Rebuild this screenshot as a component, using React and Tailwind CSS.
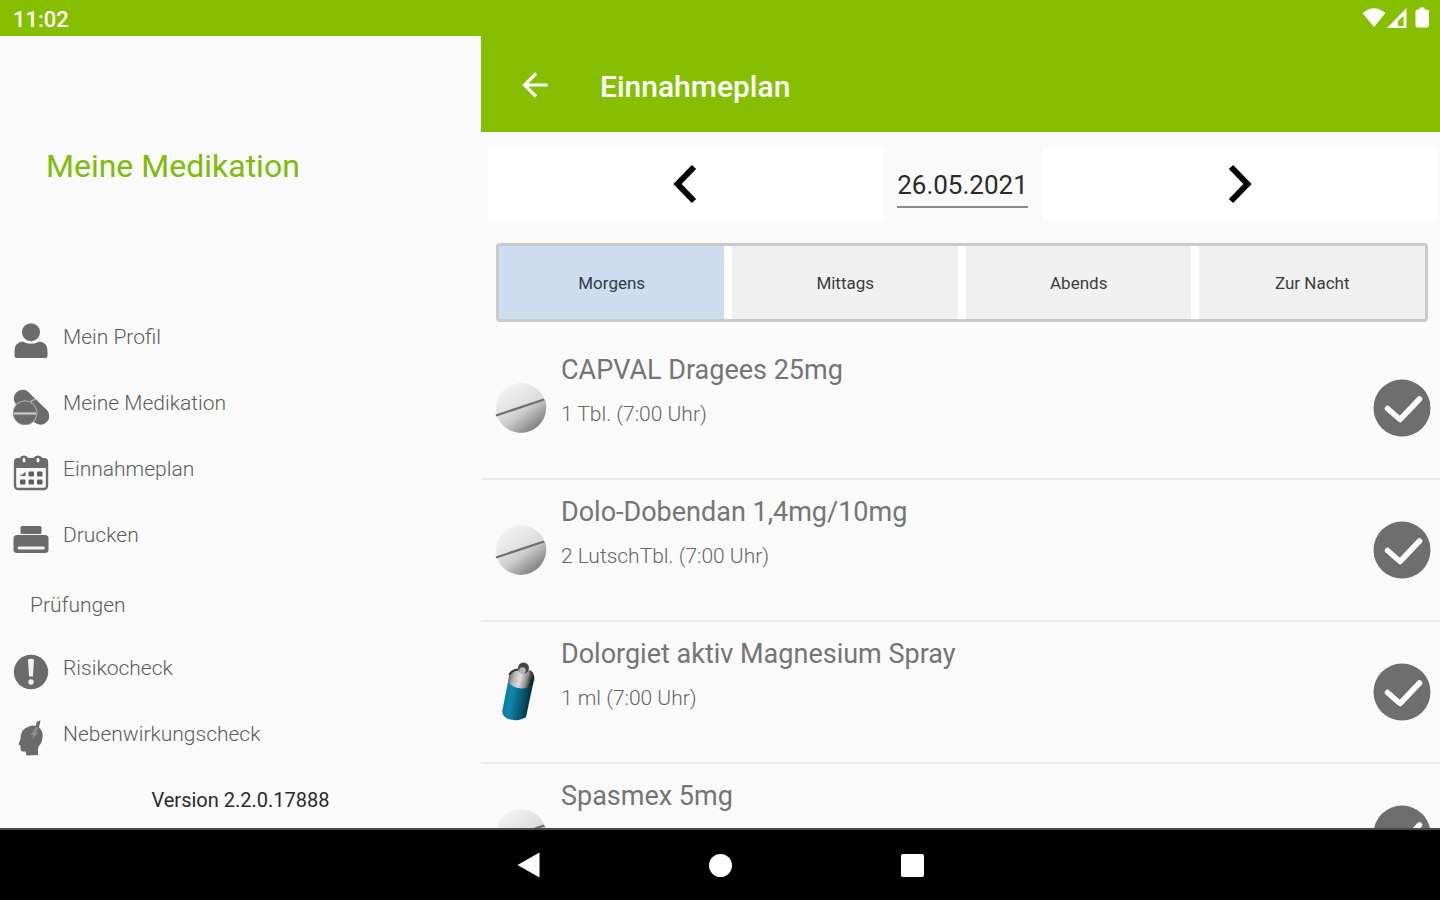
import { useState } from "react";

function ProfileIcon() {
  return (
    <svg viewBox="0 0 36 36" className="size-9" fill="#6b6b6b" aria-hidden="true">
      <circle cx="18" cy="9.2" r="9" />
      <path d="M1.5 33V28.5Q1.5 19.500 9.5 18.500Q18 23 26.500 18.500Q34.500 19.500 34.500 28.500V33Q34.500 35 32.500 35H3.500Q1.500 35 1.500 33Z" />
    </svg>
  );
}

function PillsIcon() {
  return (
    <svg viewBox="0 0 36 36" className="size-9" aria-hidden="true">
      <line x1="9.500" y1="9.500" x2="27.500" y2="27" stroke="#6b6b6b" strokeWidth="17.500" strokeLinecap="round" />
      <circle cx="12" cy="24" r="12.500" fill="#b4b4b4" />
      <circle cx="12" cy="24" r="11.500" fill="#6b6b6b" />
      <path d="M1 24.500H23" stroke="#cccccc" strokeWidth="2.200" />
      <path d="M22.500 10L17.500 12.500" stroke="#b4b4b4" strokeWidth="1.400" />
    </svg>
  );
}

function CalendarIcon() {
  return (
    <svg viewBox="0 0 36 36" className="size-9" aria-hidden="true">
      <rect x="2" y="5" width="32" height="29" rx="3" fill="#fafafa" stroke="#6b6b6b" strokeWidth="2.400" />
      <path d="M1 13V6.500Q1 3 4.500 3H6.500Q8 0.500 11 0.500T15.500 3H20.500Q22 0.500 25 0.500T29.500 3H31.500Q35 3 35 6.500V13Z" fill="#6b6b6b" />
      <path d="M11 4.500V6M25 4.500V6" stroke="#fafafa" strokeWidth="2.800" strokeLinecap="round" />
      <g fill="#5f5f5f">
        <path d="M7 19L9 20L12.500 16.500V21H8Z" />
        <rect x="15.500" y="16.500" width="5.500" height="5" rx="1" />
        <rect x="24" y="16.500" width="5.500" height="5" rx="1" />
        <rect x="7" y="24.500" width="5.500" height="5" rx="1" />
        <rect x="15.500" y="24.500" width="5.500" height="5" rx="1" />
        <rect x="24" y="24.500" width="5.500" height="5" rx="1" />
      </g>
    </svg>
  );
}

function PrinterIcon() {
  return (
    <svg viewBox="0 0 36 36" className="size-9" aria-hidden="true">
      <rect x="7.500" y="5" width="21" height="8" rx="1.500" fill="#6b6b6b" />
      <rect x="0.500" y="14" width="35" height="18" rx="3.500" fill="#6b6b6b" />
      <path d="M6 27H30.500" stroke="#f2f2f2" strokeWidth="2.800" strokeLinecap="round" />
    </svg>
  );
}

function AlertIcon() {
  return (
    <svg viewBox="0 0 36 36" className="size-9" aria-hidden="true">
      <circle cx="18" cy="18" r="17.200" fill="#6b6b6b" />
      <path d="M15 5.500Q18 4 21 5.500L20 22.500H16Z" fill="#f0f0f0" />
      <circle cx="18" cy="28" r="2.700" fill="#f0f0f0" />
    </svg>
  );
}

function HeadIcon() {
  return (
    <svg viewBox="0 0 36 36" className="size-9" aria-hidden="true">
      <path d="M13.500 35.500L12.500 31.500H9.500Q7.500 31 7.500 28.500V26L5.500 24L7.500 19.500Q7 9 16 6.500Q20 5 22.500 6L24 1.500L27.500 0.500L26 7.500Q30.500 11 29.500 18Q29 23 25.500 26.500Q24.500 30 25 35Z" fill="#6b6b6b" />
      <path d="M23 7L17.500 15H20.500L19 19.500L25.500 12.500H23L25.500 8Z" fill="#8c8c8c" />
    </svg>
  );
}

function TabletIcon() {
  return (
    <svg viewBox="0 0 52 52" className="size-[52px]" aria-hidden="true">
      <defs>
        <linearGradient id="pillTop" x1="0.200" y1="0.100" x2="0.800" y2="1">
          <stop offset="0" stopColor="#f2f2f2" />
          <stop offset="0.500" stopColor="#dcdcdc" />
          <stop offset="1" stopColor="#a8a8a8" />
        </linearGradient>
        <linearGradient id="pillBottom" x1="0.100" y1="0" x2="0.900" y2="0.700">
          <stop offset="0" stopColor="#f2f2f2" />
          <stop offset="0.550" stopColor="#cbcbcb" />
          <stop offset="1" stopColor="#858585" />
        </linearGradient>
      </defs>
      <circle cx="26" cy="26" r="25" fill="url(#pillTop)" />
      <path d="M1.500 33L50 17A25 25 0 0 1 1.500 33Z" fill="url(#pillBottom)" />
      <path d="M1 33.500L49 17.500" stroke="#6f6f6f" strokeWidth="2.200" />
    </svg>
  );
}

function SprayIcon() {
  return (
    <svg viewBox="0 0 52 60" className="h-[60px] w-[52px]" aria-hidden="true">
      <defs>
        <linearGradient id="sprayBody" x1="0" y1="0" x2="1" y2="0.200">
          <stop offset="0" stopColor="#0a6f92" />
          <stop offset="0.350" stopColor="#1288ae" />
          <stop offset="0.750" stopColor="#07506c" />
          <stop offset="1" stopColor="#042733" />
        </linearGradient>
        <linearGradient id="sprayCap" x1="0" y1="0" x2="1" y2="0.200">
          <stop offset="0" stopColor="#3c3c3c" />
          <stop offset="0.300" stopColor="#b4b4b4" />
          <stop offset="0.550" stopColor="#dedede" />
          <stop offset="0.800" stopColor="#8c8c8c" />
          <stop offset="1" stopColor="#1c1c1c" />
        </linearGradient>
      </defs>
      <path d="M13 20L7.500 48Q6.500 54 13 57Q24 60 31 55L38.500 20Z" fill="url(#sprayBody)" />
      <path d="M13 19Q14 9 22 7L34 8Q40 12 38.500 20Q35.500 27 26 26.500Q15 25 13 19Z" fill="url(#sprayCap)" />
      <path d="M14 13Q17 8 23 7.500M35 9Q39 12 38.500 19" fill="none" stroke="#333333" strokeWidth="1.800" />
      <circle cx="28.500" cy="6" r="5.500" fill="#444444" />
      <circle cx="27.500" cy="8.500" r="3.200" fill="#b4b4b4" />
    </svg>
  );
}

function CheckIcon() {
  return (
    <svg viewBox="0 0 58 58" className="size-[58px]" aria-hidden="true">
      <circle cx="29" cy="29" r="28.500" fill="#6e6e6e" />
      <path d="M14.500 29.500L27 40.500L46.500 20" fill="none" stroke="#ffffff" strokeWidth="5.500" strokeLinecap="round" strokeLinejoin="round" />
    </svg>
  );
}

const checks = [
  { label: "Risikocheck", Icon: AlertIcon },
  { label: "Nebenwirkungscheck", Icon: HeadIcon },
];

const pages = [
  { label: "Mein Profil", Icon: ProfileIcon },
  { label: "Meine Medikation", Icon: PillsIcon },
  { label: "Einnahmeplan", Icon: CalendarIcon },
  { label: "Drucken", Icon: PrinterIcon },
];

const dayTimes = ["Morgens", "Mittags", "Abends", "Zur Nacht"];

const intakes = [
  { name: "CAPVAL Dragees 25mg", dose: "1 Tbl. (7:00 Uhr)", Icon: TabletIcon },
  { name: "Dolo-Dobendan 1,4mg/10mg", dose: "2 LutschTbl. (7:00 Uhr)", Icon: TabletIcon },
  { name: "Dolorgiet aktiv Magnesium Spray", dose: "1 ml (7:00 Uhr)", Icon: SprayIcon },
  { name: "Spasmex 5mg", Icon: TabletIcon },
];

function MenuItem({ label, Icon }) {
  return (
    <li>
      <a href="#" className="flex h-[66px] items-center gap-3.5 pl-[13px]">
        <Icon />
        <span className="pb-1.5">{label}</span>
      </a>
    </li>
  );
}

function Sidebar() {
  return (
    <aside className="flex w-[33.4%] shrink-0 flex-col bg-[#fafafa] text-[21px] font-light text-[#5c5c5c]">
      <h1 className="px-[46px] pt-[110px] text-[32px] leading-10 font-normal text-[#80bb0a]">Meine Medikation</h1>
      <nav className="pt-[122px]">
        <ul>
          {pages.map((item) => (
            <MenuItem key={item.label} {...item} />
          ))}
        </ul>
        <h2 className="flex h-[67px] items-center pl-[30px]">Prüfungen</h2>
        <ul>
          {checks.map((item) => (
            <MenuItem key={item.label} {...item} />
          ))}
        </ul>
      </nav>
      <p className="mt-auto pb-3 text-center text-[20px] leading-8 font-normal text-[#2a2a2a]">Version 2.2.0.17888</p>
    </aside>
  );
}

function StatusBar() {
  return (
    <div className="flex h-9 shrink-0 items-center justify-between bg-[#86bf00] pr-2.5 pl-[13px] text-white">
      <span className="pt-0.5 text-[22px] font-medium">11:02</span>
      <svg viewBox="0 0 68 24" className="h-6 w-[68px]" fill="#ffffff" aria-hidden="true">
        <path d="M0.500 7Q12 -2.500 23.500 7L12 21Z" />
        <path fillRule="evenodd" d="M25 22L44.500 2V22ZM36.500 20Q34.500 16 38 13L41.500 10V20Z" />
        <path d="M57.500 1.500H62.500V3.500H65Q67 3.500 67 5.500V19.500Q67 21.500 65 21.500H55.500Q53.500 21.500 53.500 19.500V5.500Q53.500 3.500 55.500 3.500H57.500Z" />
      </svg>
    </div>
  );
}

function DateBar() {
  return (
    <div className="flex items-center pt-4 pr-[3px] pl-[7px]">
      <button type="button" aria-label="Vorheriger Tag" className="flex h-[72px] flex-1 items-center justify-center bg-white">
        <svg viewBox="0 0 24 40" className="h-10 w-6" fill="none" stroke="#000000" strokeWidth="6" aria-hidden="true">
          <path d="M21 3L4.500 20L21 37" />
        </svg>
      </button>
      <input
        type="text"
        aria-label="Datum"
        defaultValue="26.05.2021"
        className="mx-3.5 h-12 w-[131px] border-b-2 border-[#8a8a8a] bg-transparent pt-1 text-center text-[26px] text-[#2b2b2b] outline-none"
      />
      <button type="button" aria-label="Nächster Tag" className="flex h-[72px] flex-1 items-center justify-center bg-white">
        <svg viewBox="0 0 24 40" className="h-10 w-6" fill="none" stroke="#000000" strokeWidth="6" aria-hidden="true">
          <path d="M3 3L19.500 20L3 37" />
        </svg>
      </button>
    </div>
  );
}

function Plan() {
  const [active, setActive] = useState("Morgens");
  return (
    <main className="flex min-w-0 flex-1 flex-col bg-[#fafafa]">
      <header className="flex h-24 shrink-0 items-center gap-[52px] bg-[#86bf00] pt-0.5 pl-[41px] text-white">
        <button type="button" aria-label="Zurück">
          <svg viewBox="0 0 26 26" className="size-[26px]" fill="none" stroke="#ffffff" strokeWidth="3.200" aria-hidden="true">
            <path d="M25.500 13H3M14 1.500L2.500 13L14 24.500" />
          </svg>
        </button>
        <h2 className="pt-0.5 text-[30px] font-medium">Einnahmeplan</h2>
      </header>
      <DateBar />
      <div className="mt-[23px] mr-3 ml-[15px] grid h-[79px] shrink-0 grid-cols-4 gap-2 rounded-sm border-3 border-[#c9c9c9] bg-white">
        {dayTimes.map((time) => (
          <button
            key={time}
            type="button"
            aria-pressed={time === active}
            onClick={() => setActive(time)}
            className={
              time === active
                ? "bg-[#cdddef] pt-0.5 text-[17px] text-[#333c46]"
                : "bg-[#f0f0f0] pt-0.5 text-[17px] text-[#3c3c3c]"
            }
          >
            {time}
          </button>
        ))}
      </div>
      <ul className="mt-4 min-h-0 flex-1 overflow-hidden">
        {intakes.map(({ name, dose, Icon }) => (
          <li key={name} className="flex h-[142px] items-center border-b-2 border-[#ebebeb] pr-[9px] pl-3.5 text-[#757575]">
            <Icon />
            <div className="ml-3.5 flex-1 self-start pt-3">
              <h3 className="text-[27px] leading-10">{name}</h3>
              {dose && <p className="pt-2 text-[21px] leading-8 font-light text-[#666666]">{dose}</p>}
            </div>
            <button type="button" aria-label="Eingenommen">
              <CheckIcon />
            </button>
          </li>
        ))}
      </ul>
    </main>
  );
}

function SystemNav() {
  return (
    <nav className="flex h-[72px] shrink-0 justify-center border-t-2 border-[#4a4a4a] bg-black" aria-label="System">
      <button type="button" aria-label="Zurück" className="flex w-48 items-center justify-center">
        <svg viewBox="0 0 24 26" className="h-[26px] w-6" fill="#ffffff" aria-hidden="true">
          <path d="M1.500 13L23.500 0.500V25.500Z" />
        </svg>
      </button>
      <button type="button" aria-label="Startseite" className="flex w-48 items-center justify-center">
        <span className="size-[23px] rounded-full bg-white" />
      </button>
      <button type="button" aria-label="Übersicht" className="flex w-48 items-center justify-center">
        <span className="size-[23px] rounded-xs bg-white" />
      </button>
    </nav>
  );
}

export default function App() {
  return (
    <div className="flex h-screen flex-col bg-[#fafafa] font-[Roboto,sans-serif]">
      <StatusBar />
      <div className="flex min-h-0 flex-1">
        <Sidebar />
        <Plan />
      </div>
      <SystemNav />
    </div>
  );
}
